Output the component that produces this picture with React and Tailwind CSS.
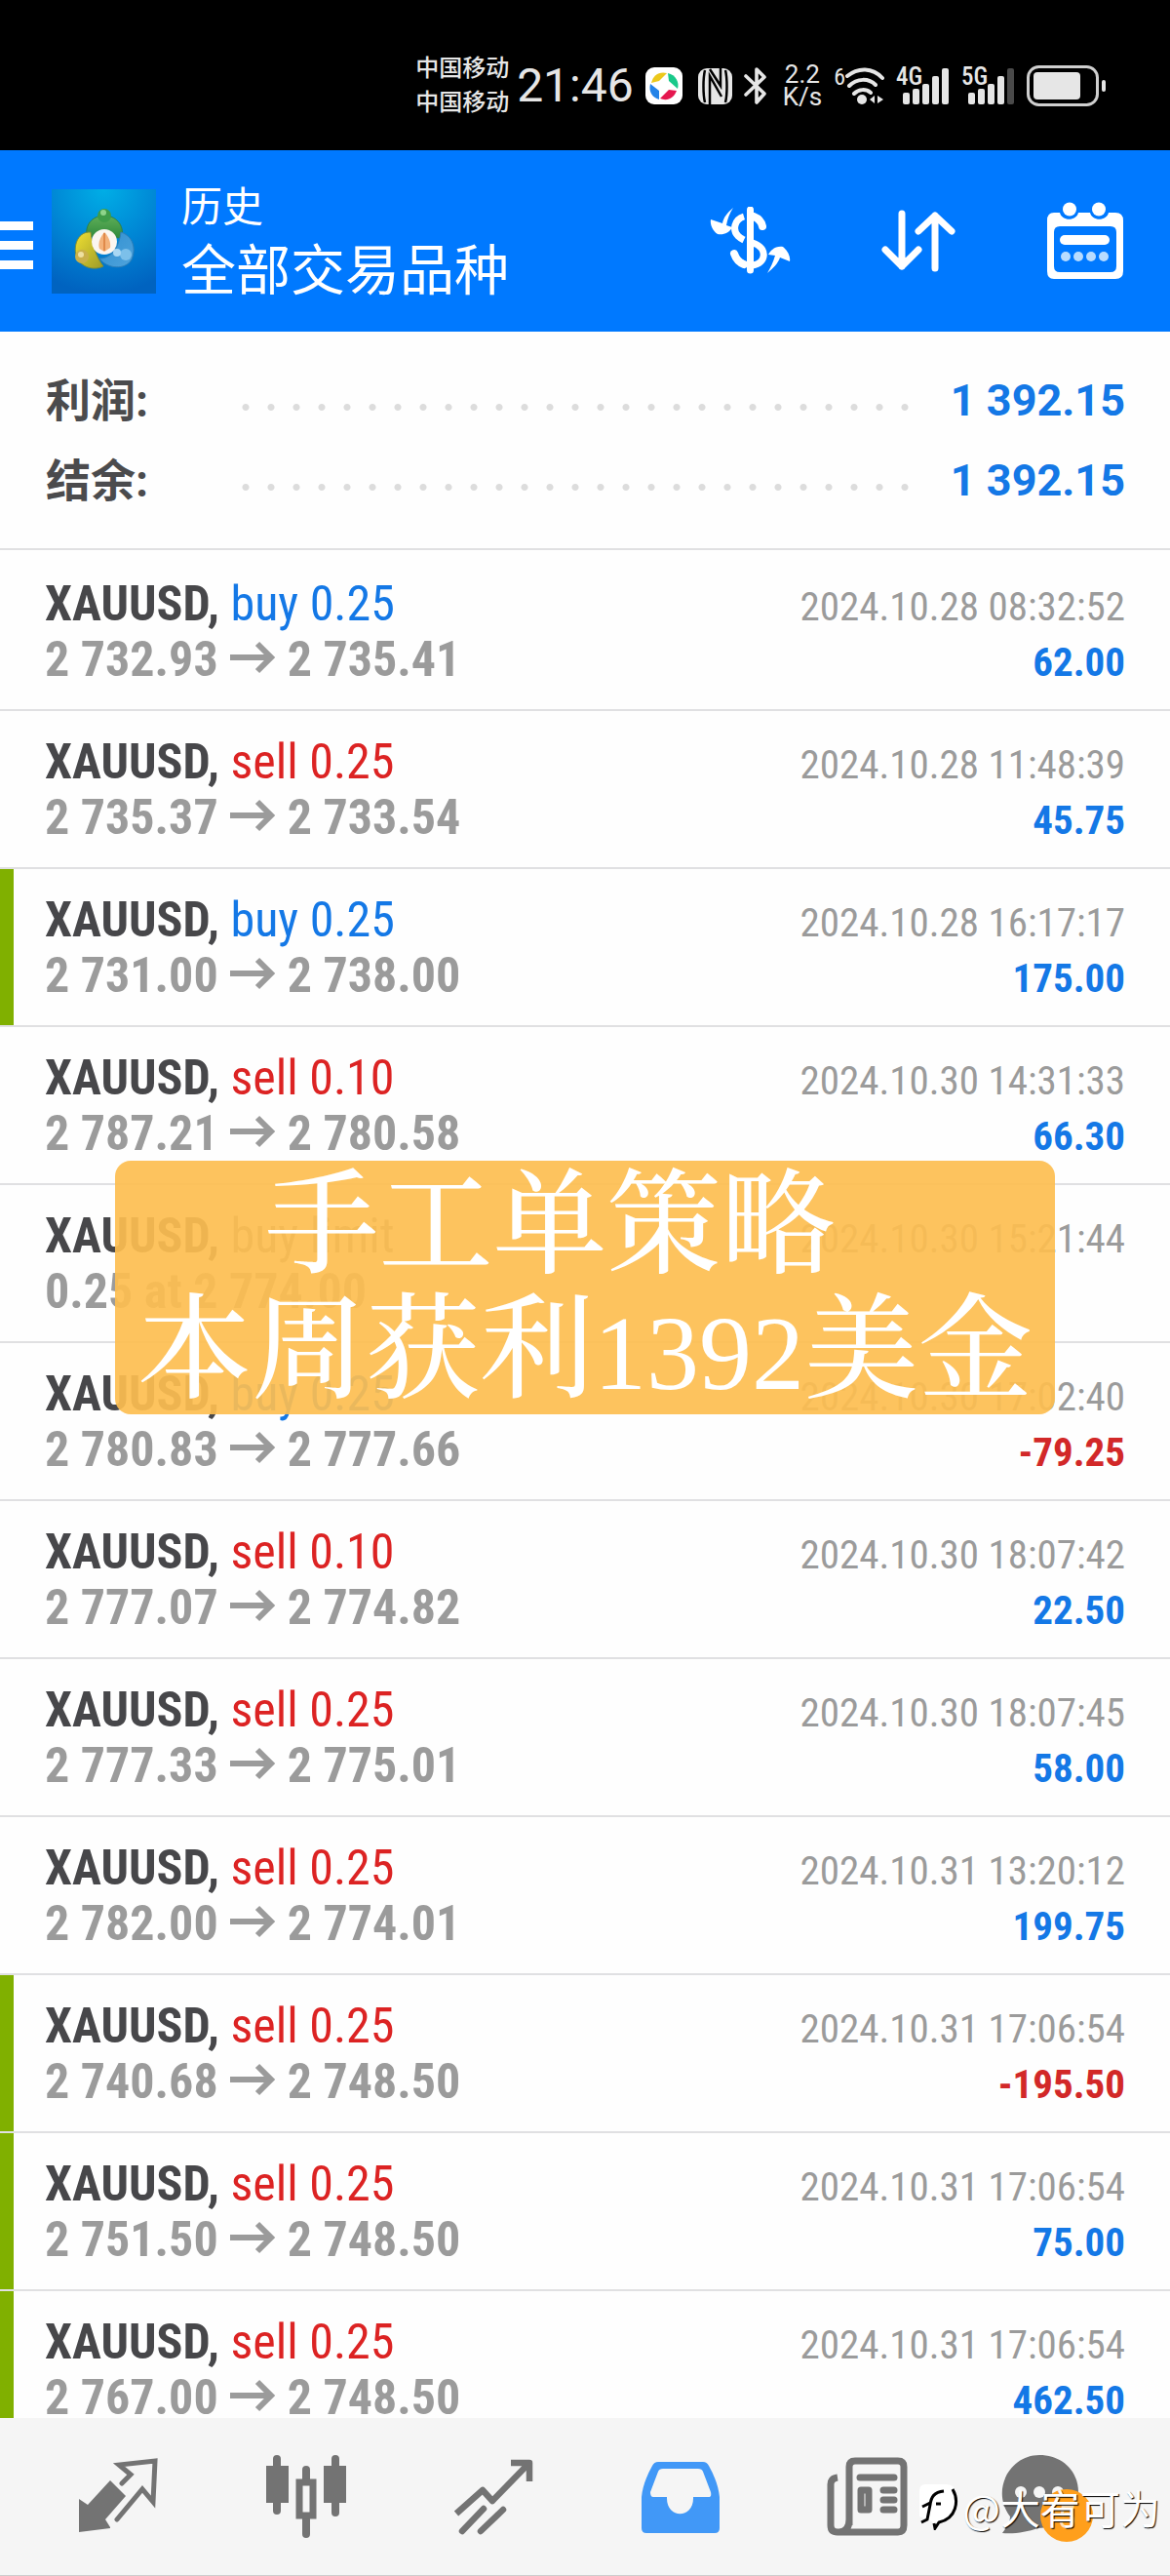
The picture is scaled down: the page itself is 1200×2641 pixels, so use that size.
import React from "react";

const deals = [
  { side: "buy", volume: "buy 0.25", prices: ["2 732.93", "2 735.41"], time: "2024.10.28 08:32:52", profit: "62.00" },
  { side: "sell", volume: "sell 0.25", prices: ["2 735.37", "2 733.54"], time: "2024.10.28 11:48:39", profit: "45.75" },
  { side: "buy", volume: "buy 0.25", prices: ["2 731.00", "2 738.00"], time: "2024.10.28 16:17:17", profit: "175.00", marked: true },
  { side: "sell", volume: "sell 0.10", prices: ["2 787.21", "2 780.58"], time: "2024.10.30 14:31:33", profit: "66.30" },
  { side: "pending", volume: "buy limit", order: "0.25 at 2 774.00", time: "2024.10.30 15:21:44" },
  { side: "buy", volume: "buy 0.25", prices: ["2 780.83", "2 777.66"], time: "2024.10.30 17:02:40", profit: "-79.25" },
  { side: "sell", volume: "sell 0.10", prices: ["2 777.07", "2 774.82"], time: "2024.10.30 18:07:42", profit: "22.50" },
  { side: "sell", volume: "sell 0.25", prices: ["2 777.33", "2 775.01"], time: "2024.10.30 18:07:45", profit: "58.00" },
  { side: "sell", volume: "sell 0.25", prices: ["2 782.00", "2 774.01"], time: "2024.10.31 13:20:12", profit: "199.75" },
  { side: "sell", volume: "sell 0.25", prices: ["2 740.68", "2 748.50"], time: "2024.10.31 17:06:54", profit: "-195.50", marked: true },
  { side: "sell", volume: "sell 0.25", prices: ["2 751.50", "2 748.50"], time: "2024.10.31 17:06:54", profit: "75.00", marked: true },
  { side: "sell", volume: "sell 0.25", prices: ["2 767.00", "2 748.50"], time: "2024.10.31 17:06:54", profit: "462.50", marked: true },
];

const sideColors = {
  buy: "text-[#1478e6]",
  sell: "text-[#dc2323]",
  pending: "text-[#8c8c8c]",
};

const Signal = ({ label, bars }) => (
  <div className="relative h-[38px] w-[55px]">
    <svg className="h-[38px] w-[55px]" viewBox="0 0 55 38">
      {[26, 22, 17, 9, 1].map((top, i) => (
        <rect key={top} x={7 + i * 10} y={top} width="7" height={38 - top} rx="2" fill={i < bars ? "#e6e6e6" : "#4a4a4a"} />
      ))}
    </svg>
    <span className="absolute top-0 left-0 font-['Roboto_Condensed',sans-serif] text-[25px] leading-[20px] font-medium">{label}</span>
  </div>
);

const StatusBar = () => (
  <div className="flex h-[154px] shrink-0 items-center bg-black pt-[22px] pr-[65px] text-[#e6e6e6]">
    <div className="ml-auto text-[24px] leading-[35px] font-medium">
      <div>中国移动</div>
      <div>中国移动</div>
    </div>
    <div className="ml-2 font-['Roboto',sans-serif] text-[48px] leading-[56px]">21:46</div>
    {/* Running app */}
    <svg className="ml-3 h-[38px] w-[38px]" viewBox="0 0 38 38" fill="none">
      <rect width="38" height="38" rx="9" fill="#fff" />
      <path d="M6 16C8 8 14 4 22 6L14 14Z" fill="#ecc81c" />
      <path d="M23 6C31 8 35 15 33 22L24 14Z" fill="#19c98a" />
      <path d="M32 24C29 32 22 35 15 32L24 23Z" fill="#e5174f" />
      <path d="M5 17C3 25 7 31 14 33L14 24Z" fill="#2383e8" />
    </svg>
    {/* NFC */}
    <svg className="ml-4 h-[37px] w-[35px]" viewBox="0 0 35 37" fill="none">
      <rect width="35" height="37" rx="9" fill="#e6e6e6" />
      <path d="M7 2C5 10 5 27 7 35M12 37V8L24 29M28 35C30 27 30 10 28 2M12 1L23 18V0" stroke="#000" strokeWidth="2.5" />
    </svg>
    {/* Bluetooth */}
    <svg className="ml-3 h-[38px] w-[24px]" viewBox="0 0 24 38" fill="none" stroke="#e6e6e6" strokeWidth="3.6" strokeLinejoin="round" strokeLinecap="round">
      <path d="M2 9L21 27L13 36V2L21 10L2 28" />
    </svg>
    <div className="ml-4 text-center font-['Roboto',sans-serif] text-[26px] leading-[23px]">
      <div>2.2</div>
      <div>K/s</div>
    </div>
    {/* Wi-Fi */}
    <div className="ml-3 flex items-start font-['Roboto_Condensed',sans-serif] text-[24px] leading-[20px]">
      6
      <svg className="h-[38px] w-[40px]" viewBox="0 0 40 38" fill="none" stroke="#e6e6e6" strokeWidth="4" strokeLinecap="round">
        <path d="M2 9C13 0 28 0 38 11M4 19C12 11 24 11 31 18M9 27C14 22 21 22 26 26" />
        <circle cx="17" cy="33" r="5" fill="#e6e6e6" stroke="none" />
        <path d="M30 29V37L25 33ZM33 29V37L39 33Z" fill="#e6e6e6" stroke="none" />
      </svg>
    </div>
    <div className="ml-3 flex gap-3">
      <Signal label="4G" bars={5} />
      <Signal label="5G" bars={4} />
    </div>
    {/* Battery */}
    <svg className="ml-3 h-[42px] w-[82px]" viewBox="0 0 82 42" fill="none">
      <rect x="1.5" y="1.5" width="71" height="39" rx="11" stroke="#cfcfcf" strokeWidth="3" />
      <rect x="7" y="7" width="48" height="28" rx="4" fill="#e6e6e6" />
      <rect x="77" y="15" width="4" height="12" rx="2" fill="#e6e6e6" />
    </svg>
  </div>
);

const AppLogo = () => (
  <svg className="h-[107px] w-[107px]" viewBox="0 0 107 107">
    <defs>
      <radialGradient id="sky" cx="0.5" cy="0" r="1">
        <stop offset="0" stopColor="#00aee6" />
        <stop offset="0.6" stopColor="#0080d2" />
        <stop offset="1" stopColor="#0063c0" />
      </radialGradient>
      <linearGradient id="green" x1="0" y1="0" x2="0" y2="1">
        <stop offset="0" stopColor="#5fae58" />
        <stop offset="1" stopColor="#2f8a3c" />
      </linearGradient>
      <linearGradient id="yellow" x1="0" y1="0" x2="1" y2="1">
        <stop offset="0" stopColor="#f0e032" />
        <stop offset="1" stopColor="#9c9a28" />
      </linearGradient>
      <linearGradient id="blue" x1="0" y1="0" x2="1" y2="1">
        <stop offset="0" stopColor="#2f8fd0" />
        <stop offset="1" stopColor="#4fa3dc" />
      </linearGradient>
    </defs>
    <rect width="107" height="107" fill="url(#sky)" />
    <path d="M36 48C34 34 44 27 54 27C65 27 75 36 72 50Z" fill="url(#green)" stroke="#2d7f4a" />
    <circle cx="54" cy="27" r="7" fill="#3f9c48" />
    <circle cx="53" cy="24" r="3" fill="#8fd48a" />
    <path d="M40 44C28 43 22 56 25 68C29 80 43 84 53 79C46 70 42 58 40 44Z" fill="url(#yellow)" stroke="#7a8c3a" />
    <circle cx="31" cy="69" r="7" fill="#c9b04a" />
    <circle cx="30" cy="67" r="3" fill="#eee0a0" />
    <path d="M71 44C83 48 87 60 82 72C76 83 57 82 49 71C61 71 69 60 71 44Z" fill="url(#blue)" stroke="#2f7fb8" />
    <circle cx="76" cy="67" r="6" fill="#7cc0ea" />
    <circle cx="67" cy="65" r="4" fill="#a9d8f4" />
    <circle cx="54" cy="54" r="13" fill="#fbf6f0" />
    <path d="M54 44C50 49 47 55 49 61L54 64L60 60C61 54 58 48 54 44Z" fill="#f3b27a" />
    <path d="M54 45V63" stroke="#e08a4a" strokeWidth="2" />
  </svg>
);

const Header = () => (
  <header className="flex h-[186px] shrink-0 items-center bg-[#0079ff] text-white">
    <button aria-label="菜单" className="flex w-[34px] flex-col gap-[11px] pt-2">
      <span className="h-[9px] w-full bg-white"></span>
      <span className="h-[9px] w-full bg-white"></span>
      <span className="h-[9px] w-full bg-white"></span>
    </button>
    <div className="ml-[19px]">
      <AppLogo />
    </div>
    <div className="ml-[26px]">
      <h1 className="text-[42px] leading-[62px]">历史</h1>
      <p className="text-[56px] leading-[68px]">全部交易品种</p>
    </div>
    <div className="ml-auto flex items-center gap-[93px] pr-12">
      <button aria-label="货币">
        <svg className="h-[70px] w-[83px]" viewBox="0 0 83 70" fill="none" stroke="#fff">
          <path d="M41.500 3V65" strokeWidth="7" strokeLinecap="round" />
          <path d="M35 10C25 13 23 24 29 30C31 32 33 33 35 34" strokeWidth="7" />
          <path d="M45 10C50 12 53 15 54 20M25 48C27 54 30 57 35 59" strokeWidth="8" strokeLinecap="round" />
          <path d="M44 37C60 42 58 58 44 60" strokeWidth="7" />
          <path d="M24 1C18 6 14 11 13 17L1 13C0 18 3 25 8 28C14 29 20 27 23 21L17 19C18 13 20 7 24 1Z" fill="#fff" stroke="none" />
          <path d="M59 68C65 63 70 58 72 52L82 56C83 51 80 45 75 41C69 40 63 43 60 49L67 50C65 57 62 63 59 68Z" fill="#fff" stroke="none" />
        </svg>
      </button>
      <button aria-label="排序">
        <svg className="h-[64px] w-[76px]" viewBox="0 0 76 64" fill="none" stroke="#fff" strokeWidth="7" strokeLinecap="round" strokeLinejoin="round">
          <path d="M21 4V58M4 41L21 58L38 41M55 60V6M38 22L55 6L72 22" />
        </svg>
      </button>
      <button aria-label="日期">
        <svg className="h-[80px] w-[79px]" viewBox="0 0 79 80" fill="none">
          <path d="M8 11H14C16 20 31 20 33 11H45C47 20 62 20 64 11H71Q79 11 79 19V71Q79 79 71 79H8Q1 79 1 71V19Q1 11 8 11ZM14 25Q8 25 8 31V66Q8 72 14 72H66Q72 72 72 66V31Q72 25 66 25Z" fill="#fff" fillRule="evenodd" />
          <circle cx="24" cy="7.500" r="7" fill="#fff" />
          <circle cx="54" cy="7.500" r="7" fill="#fff" />
          <path d="M19 39H60" stroke="#fff" strokeWidth="10" strokeLinecap="round" />
          <g fill="#b8dcff">
            <circle cx="20" cy="56" r="5" />
            <circle cx="33" cy="56" r="5" />
            <circle cx="46" cy="56" r="5" />
            <circle cx="59" cy="56" r="5" />
          </g>
        </svg>
      </button>
    </div>
  </header>
);

const SummaryRow = ({ label, value }) => (
  <div className="flex h-[82px] items-center">
    <dt className="w-[192px] text-[46px] font-bold text-[#4b4b4d]">{label}:</dt>
    <span className="mt-3 h-[9px] flex-1 bg-[radial-gradient(circle,#dcdcdc_3px,transparent_4px)] bg-[size:26px_9px] bg-repeat-x"></span>
    <dd className="ml-[36px] font-['Roboto',sans-serif] text-[45px] font-bold text-[#1478e6]">{value}</dd>
  </div>
);

const Deal = ({ deal }) => (
  <li className="border-b-2 border-[#e0e0e2]">
    <div
      className={`h-[160px] border-l-[14px] pt-[24px] pr-[46px] pl-[32px] leading-[57px] ${
        deal.marked ? "border-[#80b000]" : "border-transparent"
      }`}
    >
      <div className="flex h-[57px] items-baseline justify-between">
        <p className="text-[50px] font-bold text-[#47474a]">
          XAUUSD, <span className={`font-normal ${sideColors[deal.side]}`}>{deal.volume}</span>
        </p>
        <time className="text-[41px] text-[#9b9b9b]">{deal.time}</time>
      </div>
      <div className="flex h-[57px] items-baseline justify-between font-bold">
        {deal.prices ? (
          <p className="text-[50px] text-[#9b9b9b]">
            {deal.prices[0]}
            <svg className="mx-[12px] inline h-[38px] w-[47px] align-baseline" viewBox="0 0 47 38" fill="none" stroke="#9b9b9b" strokeWidth="6">
              <path d="M0 19H43M28 5L42 19L28 33" />
            </svg>
            {deal.prices[1]}
          </p>
        ) : (
          <p className="text-[50px] text-[#9b9b9b]">{deal.order}</p>
        )}
        {deal.profit && (
          <p className={`text-[41px] ${deal.profit.startsWith("-") ? "text-[#d22828]" : "text-[#1478e6]"}`}>
            {deal.profit}
          </p>
        )}
      </div>
    </div>
  </li>
);

const BottomNav = () => (
  <nav className="grid h-[162px] shrink-0 grid-cols-[repeat(5,11fr)_10fr] place-items-center border-b border-[#cdcdcd] bg-[#f5f5f5] pr-[40px] pl-[26px]">
    <a href="#quotes" aria-label="行情">
      <svg className="h-[86px] w-[86px]" viewBox="0 0 86 86" fill="none">
        <path d="M2 45L11 51L34 26L50 42L29 66L34 74V75L2 79Z" fill="#737373" />
        <path d="M46 29L55 20L43 10L80 6L78 48L67 35L41 66" stroke="#737373" strokeWidth="5" strokeLinecap="round" />
      </svg>
    </a>
    <a href="#charts" aria-label="图表">
      <svg className="h-[86px] w-[86px]" viewBox="0 0 86 86" fill="none" stroke="#737373">
        <path d="M13 4V57M73 4V59M43 15V26M43 66V81" strokeWidth="8" strokeLinecap="round" />
        <path d="M2 11H25V49H2ZM61 11H84V49H61Z" fill="#737373" stroke="none" />
        <path d="M36 28H50V62H36Z" strokeWidth="7" />
      </svg>
    </a>
    <a href="#trade" aria-label="交易">
      <svg className="h-[86px] w-[86px]" viewBox="0 0 86 86" fill="none" stroke="#737373" strokeWidth="6.500">
        <path d="M5 60L32 36L42 47L79 9M61 8H80V27" strokeLinejoin="round" />
        <path d="M33 55L11 78M53 56L30 78" strokeLinecap="round" />
      </svg>
    </a>
    <a href="#history" aria-label="历史">
      <svg className="h-[86px] w-[86px]" viewBox="0 0 86 86">
        <path d="M20 7H66Q70 7 72 11C78 22 82 32 83 43V75Q83 80 78 80H8Q3 80 3 75V43C4 32 8 22 14 11Q16 7 20 7ZM25 14Q21 14 20 17L12 38Q12 43 15 43H29C28 66 57 66 56 43H72Q75 43 74 38L66 17Q65 14 61 14Z" fill="#4198f7" fillRule="evenodd" />
      </svg>
    </a>
    <a href="#news" aria-label="新闻">
      <svg className="h-[86px] w-[86px]" viewBox="0 0 86 86" fill="none" stroke="#737373" strokeWidth="7">
        <path d="M24 72V12Q24 6 30 6H74Q80 6 80 12V72Q80 79 74 79H12Q5 79 5 72V30Q5 24 12 23M24 66Q24 78 14 79" />
        <path d="M35 23H70M59 36H70M59 46H70M59 56H70" strokeLinecap="round" />
        <path d="M36 36H44V56H36Z" strokeLinejoin="round" />
      </svg>
    </a>
    <a href="#messages" aria-label="消息">
      <svg className="h-[96px] w-[96px]" viewBox="0 0 96 96">
        <path d="M41 5C64 5 81 21 81 43C81 66 62 80 39 80C29 84 15 86 3 85C7 80 11 74 11 68C-9 42 10 5 41 5Z" fill="#737373" />
        <circle cx="22" cy="43" r="6" fill="#f5f5f5" />
        <circle cx="41" cy="43" r="6" fill="#f5f5f5" />
        <circle cx="60" cy="43" r="6" fill="#f5f5f5" />
        <circle cx="69" cy="67" r="27" fill="#ff9f1c" />
        <text x="69" y="80" textAnchor="middle" fontSize="34" fill="#ffe2b8" className="font-['Roboto',sans-serif]">5</text>
      </svg>
    </a>
  </nav>
);

const Watermark = () => (
  <div className="pointer-events-none absolute right-[10px] bottom-[41px] flex items-center gap-1 font-['Noto_Sans_CJK_SC',sans-serif] text-[41px] leading-[60px] text-white [text-shadow:1px_1px_1px_#000]">
    <svg className="h-[48px] w-[42px]" viewBox="0 0 42 48" fill="none">
      <path d="M8 1H30Q39 1 39 12V24C39 34 30 40 21 41L18 46L15 39L2 34V8Q2 1 8 1Z" fill="#fff" />
      <path d="M36 6C43 18 40 36 22 40L18 46L17 41" stroke="#000" strokeWidth="3" />
      <path d="M27 8C17 9 14 14 13 22L10 37L4 40M5 24L13 20M19 21H24" stroke="#000" strokeWidth="3" />
    </svg>
    @大宥可为
  </div>
);

const App = () => {
  return (
    <div className="relative flex h-screen flex-col overflow-hidden bg-[#fefefe] font-['Roboto_Condensed','Noto_Sans_CJK_SC',sans-serif]">
      <StatusBar />
      <Header />
      <main className="min-h-0 flex-1 overflow-hidden">
        <dl className="border-b-2 border-[#e0e0e2] pt-[30px] pr-[46px] pb-[28px] pl-[47px]">
          <SummaryRow label="利润" value="1 392.15" />
          <SummaryRow label="结余" value="1 392.15" />
        </dl>
        <ul className="pt-[3px]">
          {deals.map((deal, i) => (
            <Deal key={i} deal={deal} />
          ))}
        </ul>
      </main>
      <BottomNav />

      {/* Caption over the list */}
      <div className="absolute inset-x-[118px] top-[1190px] rounded-[16px] bg-[#fdbe50]/92 pb-1 text-center font-['Noto_Serif_CJK_SC',serif] text-[117px] leading-[110px] font-medium text-white">
        <p className="h-[128px] pr-[72px]">手工单策略</p>
        <p className="h-[128px] whitespace-nowrap">
          本周获利<span className="font-['Liberation_Serif',serif] text-[108px]">1392</span>美金
        </p>
      </div>
      <Watermark />
    </div>
  );
};

export default App;
